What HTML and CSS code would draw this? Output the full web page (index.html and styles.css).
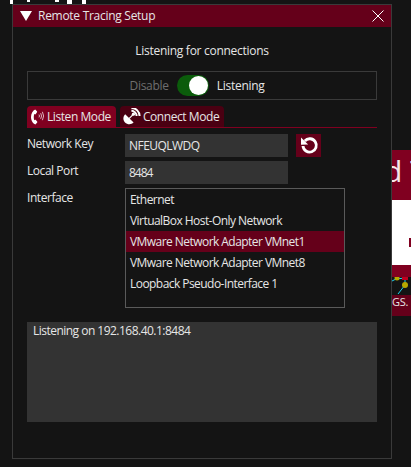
FILE: index.html
```html
<!DOCTYPE html>
<html lang="en">
<head>
    <meta charset="UTF-8">
    <meta name="viewport" content="width=device-width, initial-scale=1.0">
    <title>Remote Tracing Setup</title>
    <link rel="stylesheet" href="styles.css">
</head>
<body>
    <!-- bits of the app behind the window -->
    <div class="back-top">
        <span class="bit bit-a"></span>
        <span class="bit bit-b"></span>
        <span class="bit bit-c"></span>
        <span class="bit bit-d"></span>
        <span class="bit bit-e"></span>
    </div>
    <div class="back-side">
        <div class="side-banner">d T</div>
        <div class="side-white"><span class="side-mark"></span></div>
        <div class="side-strip"></div>
        <svg class="side-graph" width="19" height="18" viewBox="0 0 19 18">
            <rect width="19" height="18" fill="#141414"/>
            <path d="M0 4 L4 2 L13 1 L13 8 L6 17" fill="none" stroke="#22d3ee" stroke-width="1"/>
            <circle cx="5" cy="1" r="2.5" fill="#b8a800"/>
            <rect x="10" y="0" width="6" height="3" fill="#c00020"/>
            <circle cx="13" cy="8" r="3" fill="#b8a800"/>
        </svg>
        <div class="side-label">GS.</div>
    </div>

    <div class="window">
        <div class="title-bar">
            <svg class="collapse" width="12" height="10" viewBox="0 0 12 10"><path d="M0 0 H12 L6 10 Z" fill="#fff"/></svg>
            <span class="title-text">Remote Tracing Setup</span>
            <svg class="close" width="12" height="12" viewBox="0 0 12 12"><path d="M0.5 0.5 L11.5 11.5 M11.5 0.5 L0.5 11.5" stroke="#fff" stroke-width="1" fill="none"/></svg>
        </div>
        <div class="content">
            <p class="status">Listening for connections</p>

            <div class="toggle-box">
                <span class="toggle-off">Disable</span>
                <span class="switch"><span class="knob"></span></span>
                <span>Listening</span>
            </div>

            <div class="tabs">
                <div class="tab tab-active">
                    <svg width="15" height="16" viewBox="0 0 15 16">
                        <path d="M5.2 0.6 C3 1.6 1 4.5 1 8 C1 11.5 3 14.6 5.4 15.4 L7.2 13.6 C7.5 13.2 7.4 12.8 7.1 12.5 L5.8 11 C5.5 10.7 5.1 10.7 4.8 10.9 L4.3 11.3 C3.6 9.4 3.6 6.8 4.3 5 L4.9 5.3 C5.2 5.5 5.6 5.4 5.8 5.1 L7 3.3 C7.2 3 7.2 2.6 6.9 2.3 Z" fill="#fff"/>
                        <path d="M9 5.6 Q10 7 9 8.4 M10.7 4.2 Q12.4 7 10.7 9.8 M12.4 2.8 Q14.8 7 12.4 11.2" stroke="#e9c8d0" stroke-width="0.9" fill="none"/>
                    </svg>
                    <span>Listen Mode</span>
                </div>
                <div class="tab">
                    <svg width="18" height="17" viewBox="0 0 18 17">
                        <path d="M2.2 6.2 L10.6 14.6 C8 17 4.2 16.6 2 14.4 C-0.2 12.2 -0.2 8.6 2.2 6.2 Z" fill="#fff"/>
                        <path d="M6 10.6 L10 6.6" stroke="#fff" stroke-width="1.2"/>
                        <circle cx="10.4" cy="6.2" r="1.6" fill="#fff"/>
                        <path d="M8.4 2.8 C11.2 2.8 13.6 5.2 13.6 8" stroke="#fff" stroke-width="2" fill="none"/>
                        <path d="M8.4 0 C13 0 16.6 3.6 16.6 8" stroke="#fff" stroke-width="2" fill="none"/>
                    </svg>
                    <span>Connect Mode</span>
                </div>
            </div>

            <div class="form">
                <label class="form-label">Network Key</label>
                <div class="key-row">
                    <div class="input">NFEUQLWDQ</div>
                    <button class="reset">
                        <svg width="20" height="20" viewBox="0 0 18 18">
                            <path d="M3.6 9 A6 6 0 1 0 5.2 4.4" stroke="#fff" stroke-width="2.6" fill="none"/>
                            <path d="M1.8 1.4 L8.2 7.6 L1.8 7.8 Z" fill="#fff"/>
                        </svg>
                    </button>
                </div>

                <label class="form-label">Local Port</label>
                <div class="input input-num">8484</div>

                <label class="form-label">Interface</label>
                <ul class="iface-list">
                    <li>Ethernet</li>
                    <li>VirtualBox Host-Only Network</li>
                    <li class="selected">VMware Network Adapter VMnet1</li>
                    <li>VMware Network Adapter VMnet8</li>
                    <li>Loopback Pseudo-Interface 1</li>
                </ul>
            </div>

            <div class="log">Listening on 192.168.40.1:8484</div>
        </div>
    </div>
</body>
</html>
```

FILE: styles.css
```css
html, body {
    margin: 0;
    height: 100%;
    overflow: hidden;
}
body {
    background-color: #141414;
    color: #e6e6e6;
    font-family: "Open Sans", sans-serif;
    font-size: 12px;
    line-height: 18px;
    letter-spacing: -0.28px;
}

/* app behind the window */
.bit {
    position: absolute;
    top: 0;
    height: 4px;
    background-color: #fff;
}
.bit-a { left: 10px; width: 3px; }
.bit-b { left: 27px; width: 3px; height: 2px; }
.bit-c { left: 55px; width: 4px; height: 2px; }
.bit-d { left: 67px; width: 5px; }
.bit-e { left: 82px; width: 4px; }

.back-side {
    position: absolute;
    left: 392px;
    top: 150px;
    width: 19px;
    overflow: hidden;
}
.side-banner {
    height: 50px;
    margin-left: -8px;
    background-color: #800020;
    color: #f4e6ea;
    font-size: 30px;
    line-height: 41px;
    letter-spacing: 0;
    white-space: nowrap;
}
.side-white {
    position: relative;
    height: 65px;
    background-color: #fff;
}
.side-mark {
    position: absolute;
    left: 17px;
    top: 38px;
    width: 3px;
    height: 9px;
    background-color: #800020;
}
.side-strip {
    height: 12px;
    background-color: #800020;
}
.side-graph {
    display: block;
}
.side-label {
    height: 21px;
    background-color: #65001a;
    font-size: 11px;
    line-height: 14px;
    white-space: nowrap;
}

/* window */
.window {
    position: absolute;
    left: 12px;
    top: 4px;
    width: 378px;
    height: 453px;
    border: 1px solid #3a3a3a;
    background-color: #141414;
}
.title-bar {
    display: flex;
    align-items: center;
    height: 22px;
    padding: 0 7px 0 7px;
    background-color: #65001a;
}
.collapse {
    margin-right: 6px;
}
.title-text {
    flex: 1;
}
.close {
    margin-right: 0;
}
.content {
    padding: 0 14px;
}
.status {
    margin: 15px 0 11px;
    text-align: center;
}
.toggle-box {
    display: flex;
    align-items: center;
    justify-content: center;
    gap: 8px;
    height: 27px;
    padding-right: 10px;
    border: 1px solid #3a3a3a;
}
.toggle-off {
    color: #6e6e6e;
}
.switch {
    display: flex;
    align-items: center;
    justify-content: flex-end;
    width: 32px;
    height: 21px;
    padding: 0 1px;
    box-sizing: border-box;
    border-radius: 11px;
    background-color: #0b5c0b;
}
.knob {
    width: 19px;
    height: 19px;
    border-radius: 50%;
    background-color: #fff;
}
.tabs {
    display: flex;
    gap: 4px;
    margin-top: 6px;
    height: 21px;
    border-bottom: 1px solid #800020;
}
.tab {
    display: flex;
    align-items: center;
    gap: 2px;
    padding: 0 5px 0 3px;
    border-radius: 4px 4px 0 0;
    background-color: #4a0012;
    letter-spacing: -0.43px;
}
.tab-active {
    background-color: #800020;
}
.form {
    display: grid;
    grid-template-columns: 98px 1fr;
    row-gap: 4px;
    margin-top: 6px;
}
.form-label {
    line-height: 20px;
    letter-spacing: -0.45px;
}
.key-row {
    display: flex;
    gap: 8px;
}
.input {
    width: 159px;
    height: 23px;
    padding-left: 4px;
    line-height: 23px;
    background-color: #333;
    letter-spacing: -0.55px;
}
.input-num {
    letter-spacing: -1px;
}
.reset {
    display: flex;
    align-items: center;
    justify-content: center;
    width: 25px;
    height: 23px;
    padding: 0;
    border: none;
    background-color: #65001a;
}
.iface-list {
    width: 218px;
    height: 118px;
    margin: 0;
    padding: 0;
    list-style: none;
    border: 1px solid #5a5a5a;
    letter-spacing: -0.55px;
}
.iface-list li {
    height: 21px;
    padding-left: 4px;
    line-height: 21px;
}
.iface-list .selected {
    background-color: #65001a;
}
.log {
    height: 95px;
    margin-top: 14px;
    padding: 0 6px 5px;
    background-color: #333;
    letter-spacing: -0.52px;
}
```
